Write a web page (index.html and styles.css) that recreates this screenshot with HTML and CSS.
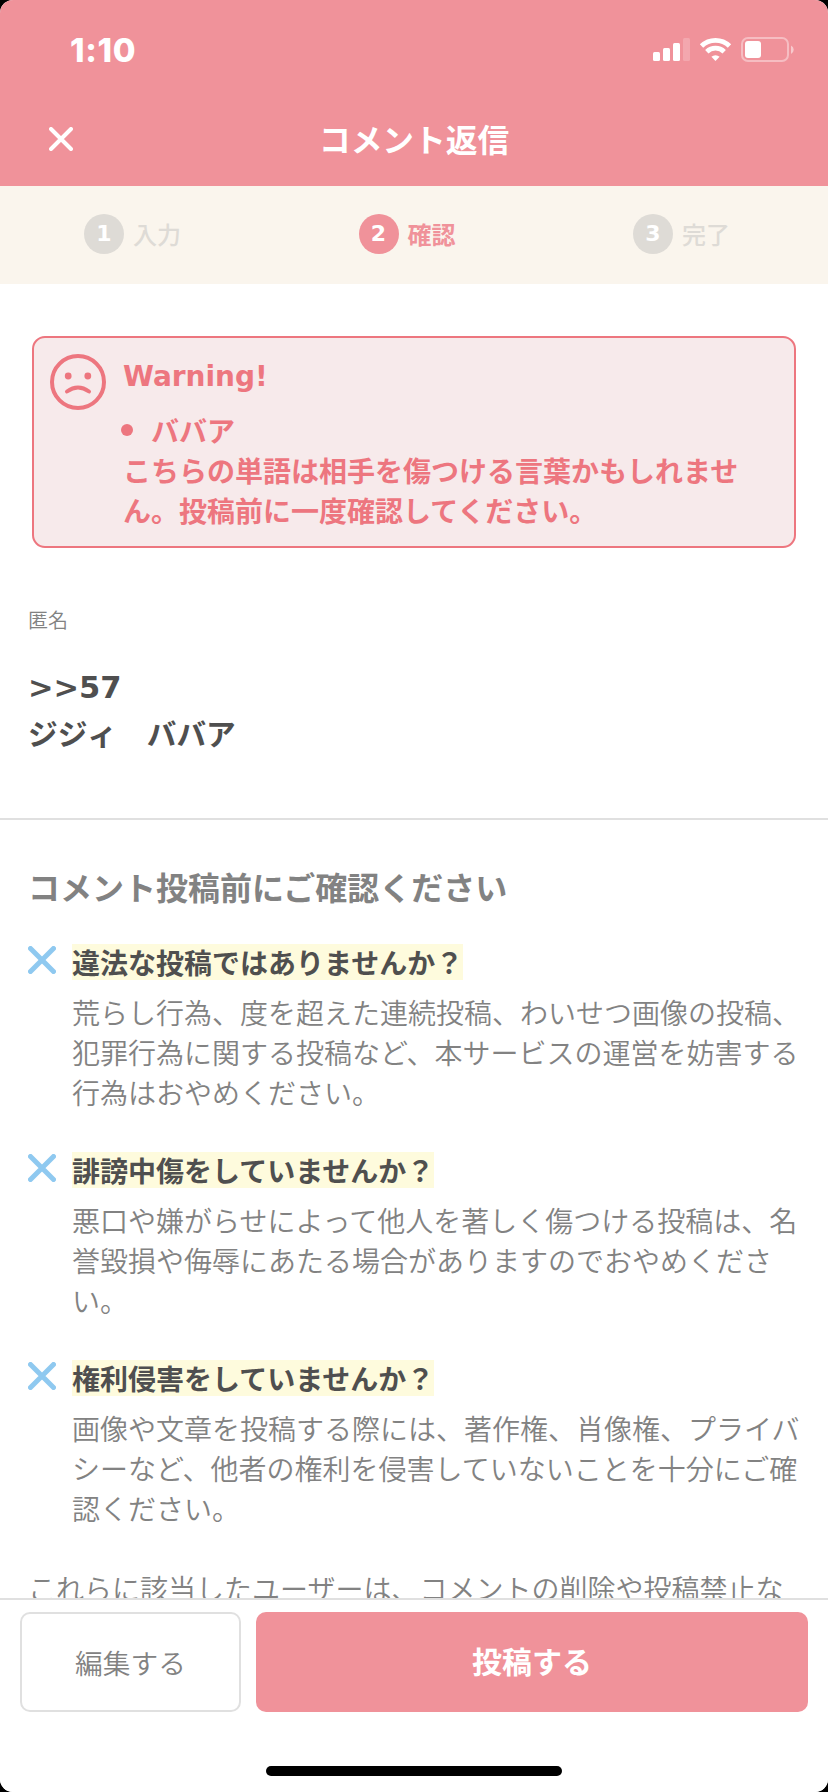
FILE: index.html
```html
<!DOCTYPE html>
<html lang="ja">

<head>
    <meta charset="UTF-8">
    <meta name="viewport" content="width=device-width, initial-scale=1.0">
    <title>コメント返信</title>
    <link rel="stylesheet" href="styles.css">
</head>

<body>
    <div class="screen">
        <header>
            <div class="status-bar">
                <span class="time">1:10</span>
                <svg class="status-icons" width="142" height="26" viewBox="0 0 142 26" fill="#fff">
                    <rect x="0" y="15" width="7" height="9" rx="1.5"/>
                    <rect x="10" y="11" width="7" height="13" rx="1.5"/>
                    <rect x="20" y="6" width="7" height="18" rx="1.5"/>
                    <rect x="30" y="1" width="7" height="23" rx="1.5" opacity=".2"/>
                    <path d="M62.500 24l4.100-4.200a6 6 0 0 0-8.200 0z"/>
                    <g fill="none" stroke="#fff" stroke-width="4.800">
                        <path d="M53.800 14.700a12.500 12.500 0 0 1 17.400 0"/>
                        <path d="M48.500 9a20 20 0 0 1 28 0"/>
                    </g>
                    <rect x="89" y="1" width="46" height="23" rx="6" fill="none" stroke="#fff" stroke-width="2" opacity=".4"/>
                    <rect x="92" y="4" width="16" height="17" rx="3"/>
                    <path d="M138 8.500a4.700 4.700 0 0 1 0 8.500z" opacity=".5"/>
                </svg>
            </div>
            <div class="title-bar">
                <svg class="close" width="24" height="24" viewBox="0 0 24 24">
                    <path d="M2 2l20 20M22 2L2 22"/>
                </svg>
                <h1>コメント返信</h1>
            </div>
        </header>
        <ol class="steps">
            <li><span class="num">1</span>入力</li>
            <li class="active"><span class="num">2</span>確認</li>
            <li><span class="num">3</span>完了</li>
        </ol>
        <main>
            <div class="warning">
                <svg class="face" width="56" height="56" viewBox="0 0 56 56">
                    <circle cx="28" cy="28" r="26"/>
                    <path d="M17 37.500q11-8 22 0"/>
                    <circle class="eye" cx="18.200" cy="22" r="3.400"/>
                    <circle class="eye" cx="37.800" cy="22" r="3.400"/>
                </svg>
                <div class="warning-body">
                    <h2>Warning!</h2>
                    <ul>
                        <li>ババア</li>
                    </ul>
                    <p>こちらの単語は相手を傷つける言葉かもしれませ<br>ん。投稿前に一度確認してください。</p>
                </div>
            </div>
            <section class="comment">
                <p class="name">匿名</p>
                <p class="anchor">&gt;&gt;57</p>
                <p class="text">ジジィ　ババア</p>
            </section>
            <section class="rules">
                <h2>コメント投稿前にご確認ください</h2>
                <div class="rule">
                    <svg class="cross" width="28" height="28" viewBox="0 0 28 28"><path d="M2.500 2.500l23 23M25.500 2.500l-23 23"/></svg>
                    <div>
                        <h3>違法な投稿ではありませんか？</h3>
                        <p>荒らし行為、度を超えた連続投稿、わいせつ画像の投稿、<br>犯罪行為に関する投稿など、本サービスの運営を妨害する<br>行為はおやめください。</p>
                    </div>
                </div>
                <div class="rule">
                    <svg class="cross" width="28" height="28" viewBox="0 0 28 28"><path d="M2.500 2.500l23 23M25.500 2.500l-23 23"/></svg>
                    <div>
                        <h3>誹謗中傷をしていませんか？</h3>
                        <p>悪口や嫌がらせによって他人を著しく傷つける投稿は、名<br>誉毀損や侮辱にあたる場合がありますのでおやめくださ<br>い。</p>
                    </div>
                </div>
                <div class="rule">
                    <svg class="cross" width="28" height="28" viewBox="0 0 28 28"><path d="M2.500 2.500l23 23M25.500 2.500l-23 23"/></svg>
                    <div>
                        <h3>権利侵害をしていませんか？</h3>
                        <p>画像や文章を投稿する際には、著作権、肖像権、プライバ<br>シーなど、他者の権利を侵害していないことを十分にご確<br>認ください。</p>
                    </div>
                </div>
                <p class="note">これらに該当したユーザーは、コメントの削除や投稿禁止な</p>
            </section>
        </main>
        <footer>
            <div class="buttons">
                <button class="edit">編集する</button>
                <button class="post">投稿する</button>
            </div>
            <div class="home-bar"></div>
        </footer>
    </div>
</body>

</html>
```
FILE: styles.css
```css
* {
    box-sizing: border-box;
    margin: 0;
    padding: 0;
}

body {
    background-color: #000;
    font-family: "Noto Sans CJK JP", sans-serif;
    color: #828282;
}

.screen {
    display: flex;
    flex-direction: column;
    width: 828px;
    height: 1792px;
    border-radius: 13px;
    background-color: #fff;
    overflow: hidden;
    white-space: nowrap;
}

header {
    height: 186px;
    flex-shrink: 0;
    background-color: #f0929a;
    color: #fff;
}

.status-bar {
    display: flex;
    justify-content: space-between;
    height: 96px;
    padding: 30px 33px 0 70px;
}

.time {
    font-family: Inter, sans-serif;
    font-size: 33px;
    font-weight: 800;
    line-height: 40px;
    letter-spacing: 0.700px;
}

.status-icons {
    margin-top: 7px;
}

.title-bar {
    display: grid;
    grid-template-columns: 24px 1fr 24px;
    align-items: center;
    height: 86px;
    padding: 0 49px;
}

.close path {
    stroke: #fff;
    stroke-width: 4;
    stroke-linecap: round;
}

.title-bar h1 {
    padding-bottom: 2px;
    font-size: 31.700px;
    line-height: 40px;
    text-align: center;
}

.steps {
    display: flex;
    justify-content: space-between;
    flex-shrink: 0;
    height: 98px;
    padding: 28px 98px 0 84px;
    background-color: #faf5ed;
    list-style: none;
}

.steps li {
    display: flex;
    gap: 9px;
    height: 40px;
    font-size: 24px;
    font-weight: 500;
    line-height: 40px;
    color: #dedbd6;
}

.steps .num {
    width: 40px;
    border-radius: 50%;
    background-color: #dedbd6;
    color: #fff;
    font-family: "DejaVu Sans", sans-serif;
    font-size: 22px;
    font-weight: 700;
    text-align: center;
}

.steps .active {
    color: #f0929a;
    font-weight: 700;
}

.steps .active .num {
    background-color: #f0929a;
}

main {
    flex: 1;
    min-height: 0;
    overflow: hidden;
}

.warning {
    display: flex;
    gap: 17px;
    height: 212px;
    margin: 52px 32px 0;
    padding: 16px;
    border: 2px solid #ed767f;
    border-radius: 13px;
    background-color: #f7eaeb;
    color: #ed767f;
}

.face {
    fill: none;
    stroke: #ed767f;
    stroke-width: 4;
    stroke-linecap: round;
}

.face .eye {
    fill: #ed767f;
    stroke: none;
}

.warning h2 {
    font-family: "DejaVu Sans", sans-serif;
    font-size: 28px;
    line-height: 46px;
}

.warning ul {
    margin-top: 10px;
    list-style: none;
}

.warning li {
    display: flex;
    align-items: center;
    gap: 18px;
    margin-left: -2px;
}

.warning li::before {
    content: "";
    width: 12px;
    height: 12px;
    border-radius: 50%;
    background-color: #ed767f;
}

.warning li,
.warning p {
    font-size: 28px;
    font-weight: 700;
    line-height: 40px;
}

.comment {
    height: 272px;
    padding: 57px 28px 0;
    border-bottom: 2px solid #e0e0e0;
    color: #4f4f4f;
}

.comment .name {
    font-size: 20px;
    font-weight: 350;
    line-height: 30px;
    color: #828282;
}

.comment .anchor {
    margin-top: 30px;
    font-family: "DejaVu Sans", sans-serif;
    font-size: 30.500px;
    font-weight: 700;
    line-height: 46px;
}

.comment .text {
    margin-top: -1px;
    font-size: 29.700px;
    font-weight: 700;
    line-height: 46px;
}

.rules {
    padding: 42px 28px 0;
}

.rules h2 {
    margin-bottom: 34px;
    font-size: 32px;
    font-weight: 700;
    line-height: 48px;
}

.rule {
    display: flex;
    gap: 16px;
    height: 208px;
}

.cross {
    margin-top: 2px;
    stroke: #8fc9f0;
    stroke-width: 5;
    stroke-linecap: round;
}

.rule h3 {
    width: max-content;
    margin-bottom: 12px;
    background-color: #fefbdd;
    color: #4f4f4f;
    font-size: 28px;
    font-weight: 700;
    line-height: 36px;
}

.rule p,
.note {
    font-size: 28px;
    font-weight: 350;
    line-height: 40px;
}

footer {
    flex-shrink: 0;
    height: 194px;
    padding: 12px 20px 0;
    border-top: 2px solid #e0e0e0;
    background-color: #fff;
}

.buttons {
    display: grid;
    grid-template-columns: 221px 1fr;
    gap: 15px;
    height: 100px;
}

.buttons button {
    border: none;
    border-radius: 10px;
    font-family: inherit;
}

.buttons .edit {
    border: 2px solid #e0e0e0;
    background-color: #fff;
    color: #828282;
    font-size: 27.700px;
    font-weight: 350;
}

.buttons .post {
    padding-bottom: 5px;
    background-color: #f0929a;
    color: #fff;
    font-size: 30px;
    font-weight: 700;
}

.home-bar {
    width: 296px;
    height: 10px;
    margin: 54px auto 0;
    border-radius: 5px;
    background-color: #000;
}
```
